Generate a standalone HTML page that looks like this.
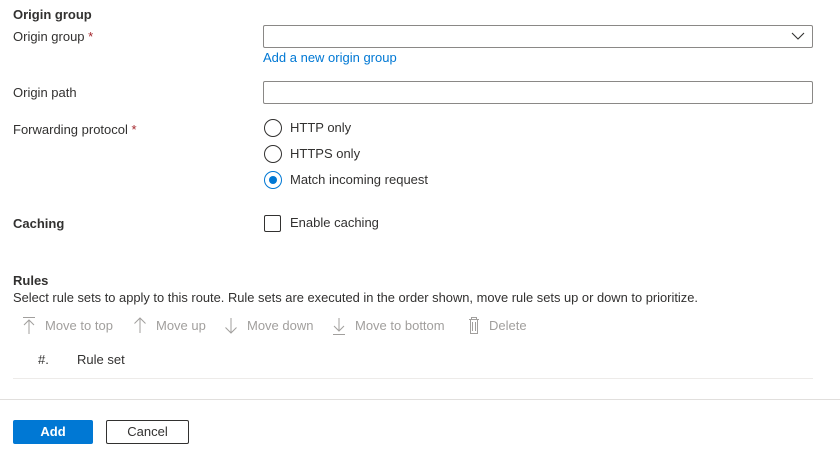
<!DOCTYPE html>
<html><head><style>
body{margin:0;width:840px;height:452px;background:#fff;font-family:"Liberation Sans",sans-serif;font-size:13px;color:#323130;position:relative;overflow:hidden}
.a{position:absolute;white-space:nowrap;line-height:16px}
.b{font-weight:bold}
.req{color:#a4262c}
.box{position:absolute;border:1px solid #8a8886;border-radius:2px;box-sizing:border-box;background:#fff}
.rad{position:absolute;left:264px;width:18px;height:18px;border:1px solid #323130;border-radius:50%;box-sizing:border-box}
.g{color:#a19f9d}
</style></head><body>
<div class="a b" style="left:13px;top:7px">Origin group</div>
<div class="a" style="left:13px;top:29px">Origin group <span class="req">*</span></div>
<div class="box" style="left:263px;top:25px;width:550px;height:23px"></div>
<svg style="position:absolute;left:791px;top:31px" width="14" height="10"><path d="M1 2 L7 8 L13 2" fill="none" stroke="#323130" stroke-width="1.1"/></svg>
<div class="a" style="left:263px;top:50px;color:#0078d4">Add a new origin group</div>
<div class="a" style="left:13px;top:85px">Origin path</div>
<div class="box" style="left:263px;top:81px;width:550px;height:23px"></div>
<div class="a" style="left:13px;top:122px">Forwarding protocol <span class="req">*</span></div>
<div class="rad" style="top:119px"></div><div class="a" style="left:290px;top:120px">HTTP only</div>
<div class="rad" style="top:145px"></div><div class="a" style="left:290px;top:146px">HTTPS only</div>
<div class="rad" style="top:171px;border-color:#0078d4"><div style="position:absolute;left:4px;top:4px;width:8px;height:8px;border-radius:50%;background:#0078d4"></div></div>
<div class="a" style="left:290px;top:172px">Match incoming request</div>
<div class="a b" style="left:13px;top:216px">Caching</div>
<div style="position:absolute;left:264px;top:215px;width:17px;height:17px;border:1px solid #323130;border-radius:2px;box-sizing:border-box"></div>
<div class="a" style="left:290px;top:215px">Enable caching</div>
<div class="a b" style="left:13px;top:273px">Rules</div>
<div class="a" style="left:13px;top:290px;font-size:12.9px">Select rule sets to apply to this route. Rule sets are executed in the order shown, move rule sets up or down to prioritize.</div>
<svg style="position:absolute;left:0;top:314px" width="540" height="24" fill="none" stroke="#a19f9d" stroke-width="1">
<path d="M23 3.5h12M29 6v14M24 11l5-5 5 5"/>
<path d="M140 4v15M134.5 9.5L140 4l5.5 5.5"/>
<path d="M231 4v15M225.5 13.5L231 19l5.5-5.5"/>
<path d="M339 4v13M334 12l5 5 5-5M333 20.5h12"/>
<path d="M469 5.5h10M471.5 5.5v-2h5v2M470.5 5.5v14h7v-14M472.5 8v9M475.5 8v9"/>
</svg>
<div class="a g" style="left:45px;top:318px">Move to top</div>
<div class="a g" style="left:156px;top:318px">Move up</div>
<div class="a g" style="left:247px;top:318px">Move down</div>
<div class="a g" style="left:355px;top:318px">Move to bottom</div>
<div class="a g" style="left:489px;top:318px">Delete</div>
<div class="a" style="left:38px;top:352px">#.</div>
<div class="a" style="left:77px;top:352px">Rule set</div>
<div style="position:absolute;left:13px;top:378px;width:800px;height:1px;background:#edebe9"></div>
<div style="position:absolute;left:0;top:399px;width:840px;height:1px;background:#e1dfdd"></div>
<div style="position:absolute;left:13px;top:420px;width:80px;height:24px;background:#0078d4;border-radius:2px;color:#fff;font-weight:bold;text-align:center;line-height:24px">Add</div>
<div style="position:absolute;left:106px;top:420px;width:83px;height:24px;border:1px solid #323130;border-radius:2px;box-sizing:border-box;text-align:center;line-height:22px">Cancel</div>
</body></html>
